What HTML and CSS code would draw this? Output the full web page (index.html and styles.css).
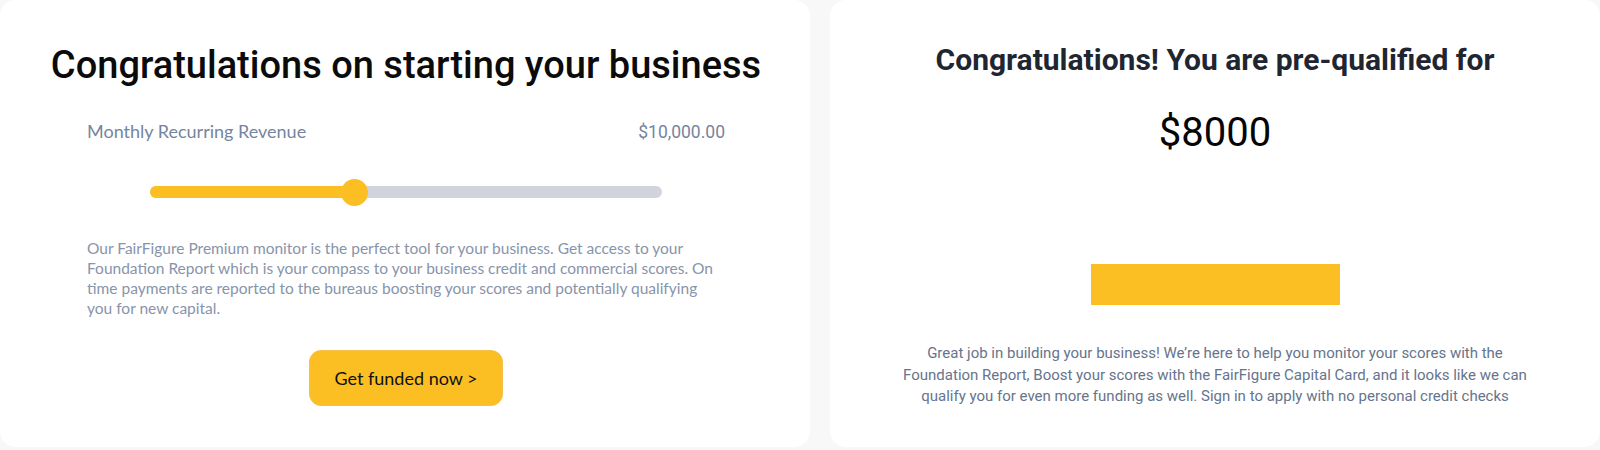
FILE: index.html
```html
<!DOCTYPE html>
<html lang="en">
<head>
<meta charset="utf-8">
<title>Congratulations</title>
<link rel="stylesheet" href="styles.css">
</head>
<body>
<main class="page">
  <section class="card card-start">
    <h1 class="start-title">Congratulations on starting your business</h1>
    <div class="mrr-row">
      <span class="mrr-label">Monthly Recurring Revenue</span>
      <span class="mrr-value">$10,000.00</span>
    </div>
    <div class="slider">
      <div class="slider-track">
        <div class="slider-fill" style="width: 40%"></div>
        <div class="slider-thumb" style="left: 40%"></div>
      </div>
    </div>
    <p class="start-text">Our FairFigure Premium monitor is the perfect tool for your business. Get access to your Foundation Report which is your compass to your business credit and commercial scores. On time payments are reported to the bureaus boosting your scores and potentially qualifying you for new capital.</p>
    <button class="funded-btn" type="button">Get funded now &gt;</button>
  </section>
  <section class="card card-qualified">
    <h2 class="qualified-title">Congratulations! You are pre-qualified for</h2>
    <div class="qualified-amount">$8000</div>
    <div class="qualified-bar"></div>
    <p class="qualified-text">Great job in building your business! We’re here to help you monitor your scores with the Foundation Report, Boost your scores with the FairFigure Capital Card, and it looks like we can qualify you for even more funding as well. Sign in to apply with no personal credit checks</p>
  </section>
</main>
</body>
</html>
```

FILE: styles.css
```css
* { box-sizing: border-box; }
html, body { margin: 0; padding: 0; }
body {
  background: #f8f8f9;
  width: 1600px;
  height: 450px;
  overflow: hidden;
}
.page {
  display: flex;
  gap: 20px;
  height: 447px;
}
.card {
  background: #ffffff;
  border-radius: 16px;
  display: flex;
  flex-direction: column;
  align-items: center;
}
.card-start {
  width: 810px;
  padding: 42px 85px 0 87px;
}
.card-qualified {
  flex: 1;
  padding: 42px 0 0 0;
}
.start-title {
  margin: 0;
  font-family: Roboto, "Liberation Sans", sans-serif;
  font-weight: 500;
  font-size: 38px;
  line-height: 46px;
  color: #0b0b0b;
  white-space: nowrap;
  text-align: center;
}
.mrr-row {
  align-self: stretch;
  display: flex;
  justify-content: space-between;
  align-items: baseline;
  margin-top: 32px;
}
.mrr-label {
  font-family: Lato, "Open Sans", sans-serif;
  font-size: 18px;
  line-height: 22px;
  color: #7585a0;
}
.mrr-value {
  font-family: Roboto, "Liberation Sans", sans-serif;
  font-size: 17.5px;
  line-height: 22px;
  color: #7585a0;
}
.slider {
  align-self: stretch;
  margin: 35px 63px 0 63px;
  height: 28px;
  display: flex;
  align-items: center;
}
.slider-track {
  position: relative;
  width: 100%;
  height: 12px;
  background: #d1d5db;
  border-radius: 6px;
}
.slider-fill {
  height: 100%;
  background: #fbbf24;
  border-radius: 6px;
}
.slider-thumb {
  position: absolute;
  top: 50%;
  width: 27px;
  height: 27px;
  margin: -13.5px 0 0 -13.5px;
  border-radius: 50%;
  background: #fbbf24;
}
.start-text {
  align-self: stretch;
  margin: 32px 0 0 0;
  font-family: Lato, "Open Sans", sans-serif;
  font-size: 15.5px;
  line-height: 20px;
  color: #8794aa;
}
.funded-btn {
  margin-top: 32px;
  width: 194px;
  height: 56px;
  border: 1px solid #f5c04a;
  border-radius: 12px;
  background: #fbbf24;
  font-family: Lato, "Open Sans", sans-serif;
  font-size: 18px;
  color: #111111;
  cursor: pointer;
}
.qualified-title {
  margin: 0;
  font-family: Roboto, "Liberation Sans", sans-serif;
  font-weight: 700;
  font-size: 30px;
  line-height: 36px;
  color: #1f2632;
  white-space: nowrap;
}
.qualified-amount {
  margin-top: 31px;
  font-family: Roboto, "Liberation Sans", sans-serif;
  font-size: 40px;
  line-height: 48px;
  color: #050505;
}
.qualified-bar {
  margin-top: 107px;
  width: 249px;
  height: 41px;
  background: #fbbf24;
}
.qualified-text {
  margin: 38px 0 0 0;
  width: 640px;
  font-family: Roboto, "Liberation Sans", sans-serif;
  font-size: 15px;
  line-height: 21.5px;
  color: #66748c;
  text-align: center;
}
```
